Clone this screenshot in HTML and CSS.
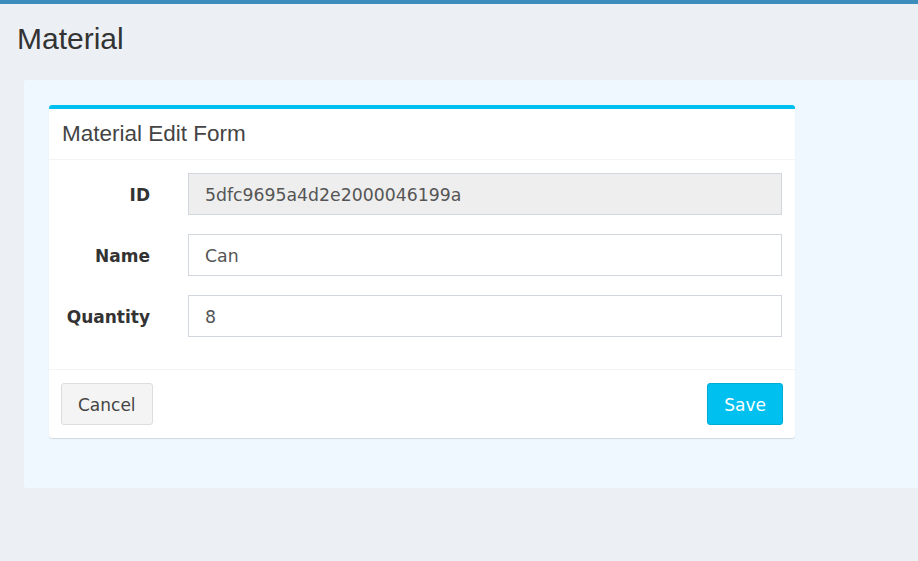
FILE: index.html
```html
<!DOCTYPE html>
<html>
<head>
<meta charset="utf-8">
<link rel="stylesheet" href="styles.css">
</head>
<body>
<div class="topbar"></div>
<h1 class="page-title">Material</h1>
<div class="content">
  <div class="box">
    <div class="box-header"><h3 class="box-title">Material Edit Form</h3></div>
    <div class="box-body">
      <div class="form-group">
        <label class="label">ID</label>
        <input class="input input-readonly" type="text" value="5dfc9695a4d2e2000046199a" readonly>
      </div>
      <div class="form-group">
        <label class="label">Name</label>
        <input class="input" type="text" value="Can">
      </div>
      <div class="form-group">
        <label class="label">Quantity</label>
        <input class="input" type="text" value="8">
      </div>
    </div>
    <div class="box-footer">
      <button class="btn btn-default">Cancel</button>
      <button class="btn btn-info">Save</button>
    </div>
  </div>
</div>
</body>
</html>
```
FILE: styles.css
```css
html, body {
  margin: 0;
  padding: 0;
}
body {
  background: #ecf0f5;
  font-family: "DejaVu Sans", Verdana, sans-serif;
  color: #333;
  width: 918px;
  height: 561px;
  overflow: hidden;
}
.topbar {
  height: 4px;
  background: #3c8dbc;
}
.page-title {
  margin: 18px 0 0 17px;
  font-family: "Liberation Sans", Arial, sans-serif;
  font-weight: normal;
  font-size: 30px;
  line-height: 33px;
  color: #333;
}
.content {
  margin: 25px 0 0 24px;
  background: #eef8fe;
  border-radius: 3px 0 0 3px;
  padding: 25px 0 50px 25px;
}
.box {
  width: 746px;
  background: #fff;
  border-top: 4px solid #00c0ef;
  border-radius: 3px;
  box-shadow: 0 1px 1px rgba(0,0,0,0.12);
}
.box-header {
  padding: 14px 13px;
  border-bottom: 1px solid #f4f4f4;
}
.box-title {
  margin: 0;
  font-family: "Liberation Sans", Arial, sans-serif;
  font-weight: normal;
  font-size: 22.5px;
  line-height: 22px;
  color: #444;
}
.box-body {
  padding: 13px 13px 13px 0;
}
.form-group {
  display: flex;
  align-items: center;
  margin-bottom: 19px;
}
.label {
  width: 101px;
  padding: 2px 38px 0 0;
  text-align: right;
  font-weight: bold;
  font-size: 17px;
  color: #333;
}
.input {
  flex: 1;
  height: 42px;
  box-sizing: border-box;
  border: 1px solid #d2d6de;
  padding: 2px 16px 0;
  font-family: "DejaVu Sans", Verdana, sans-serif;
  font-size: 17.3px;
  color: #555;
  background: #fff;
  outline: none;
}
.input-readonly {
  background: #eee;
}
.box-footer {
  display: flex;
  justify-content: space-between;
  padding: 13px 12px;
  border-top: 1px solid #f4f4f4;
}
.btn {
  height: 42px;
  box-sizing: border-box;
  padding: 2px 16px 0;
  font-family: "DejaVu Sans", Verdana, sans-serif;
  font-size: 17px;
  border-radius: 3px;
  border: 1px solid transparent;
}
.btn-default {
  background: #f4f4f4;
  border-color: #ddd;
  color: #444;
}
.btn-info {
  background: #00c0ef;
  border-color: #00acd6;
  color: #fff;
}
```
